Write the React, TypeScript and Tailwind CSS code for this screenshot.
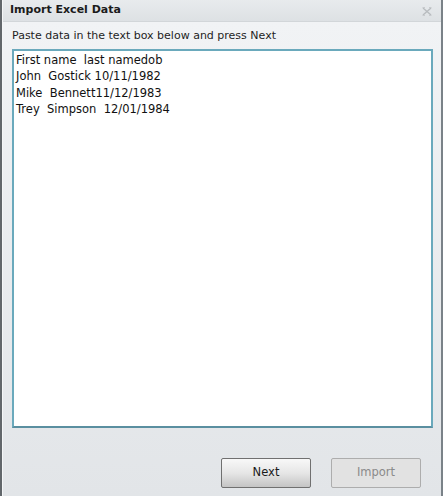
import React from "react";

const sample = `First name  last namedob
John  Gostick 10/11/1982
Mike  Bennett11/12/1983
Trey  Simpson  12/01/1984`;

export default function App() {
  return (
    <div
      className="w-[443px] h-[496px] flex bg-[#e4e7ea]"
      style={{ fontFamily: "Tahoma, 'DejaVu Sans', 'Liberation Sans', sans-serif" }}
    >
      <div className="w-[2px] bg-[#62676b]" />
      <div className="flex-1 flex flex-col border-l border-[#f4f6f7]">
        {/* title bar */}
        <div className="h-[22px] flex items-center justify-between pl-[7px] pr-[9px] bg-gradient-to-b from-[#e8ebed] to-[#dde1e4] border-b border-[#d2d6d9]">
          <span className="text-[11px] font-bold text-[#1b1b1b]">Import Excel Data</span>
          <svg width="10" height="9" viewBox="0 0 10 9" className="mt-[1px]">
            <path d="M1 1 L9 8 M9 1 L1 8" stroke="#b8bcbf" strokeWidth="1.4" fill="none" />
            <path d="M0.5 0.5 H3 M7 0.5 H9.5 M0.5 8.5 H3 M7 8.5 H9.5" stroke="#c8cbce" strokeWidth="1" fill="none" />
          </svg>
        </div>
        {/* body */}
        <div className="flex-1 flex flex-col bg-gradient-to-b from-[#f1f3f5] to-[#e2e5e8] pl-[9px] pr-[8px]">
          <div className="pt-[6px] pb-[4px] text-[11px] text-[#1e1e1e]">
            Paste data in the text box below and press Next
          </div>
          <textarea
            defaultValue={sample}
            spellCheck={false}
            className="h-[379px] w-full resize-none bg-white border-2 border-[#6aa9bc] px-[2px] py-[1px] text-[11.5px] leading-[16.5px] text-[#111] outline-none"
            style={{ fontFamily: "Tahoma, 'DejaVu Sans', 'Liberation Sans', sans-serif", borderBottomColor: "#5a8fa0" }}
          />
          <div className="flex justify-end gap-[20px] mt-[30px] pr-[12px]">
            <button className="w-[90px] h-[30px] border border-[#707070] rounded-[2px] bg-gradient-to-b from-[#f8f8f8] via-[#e6e6e6] to-[#c4c4c4] text-[11.5px] text-[#1a1a1a]">
              Next
            </button>
            <button
              disabled
              className="w-[90px] h-[30px] border border-[#adadad] rounded-[2px] bg-[#e2e2e2] text-[11.5px] text-[#8a8a8a]"
            >
              Import
            </button>
          </div>
        </div>
      </div>
      <div className="w-[2px] bg-[#7a8288]" />
    </div>
  );
}
